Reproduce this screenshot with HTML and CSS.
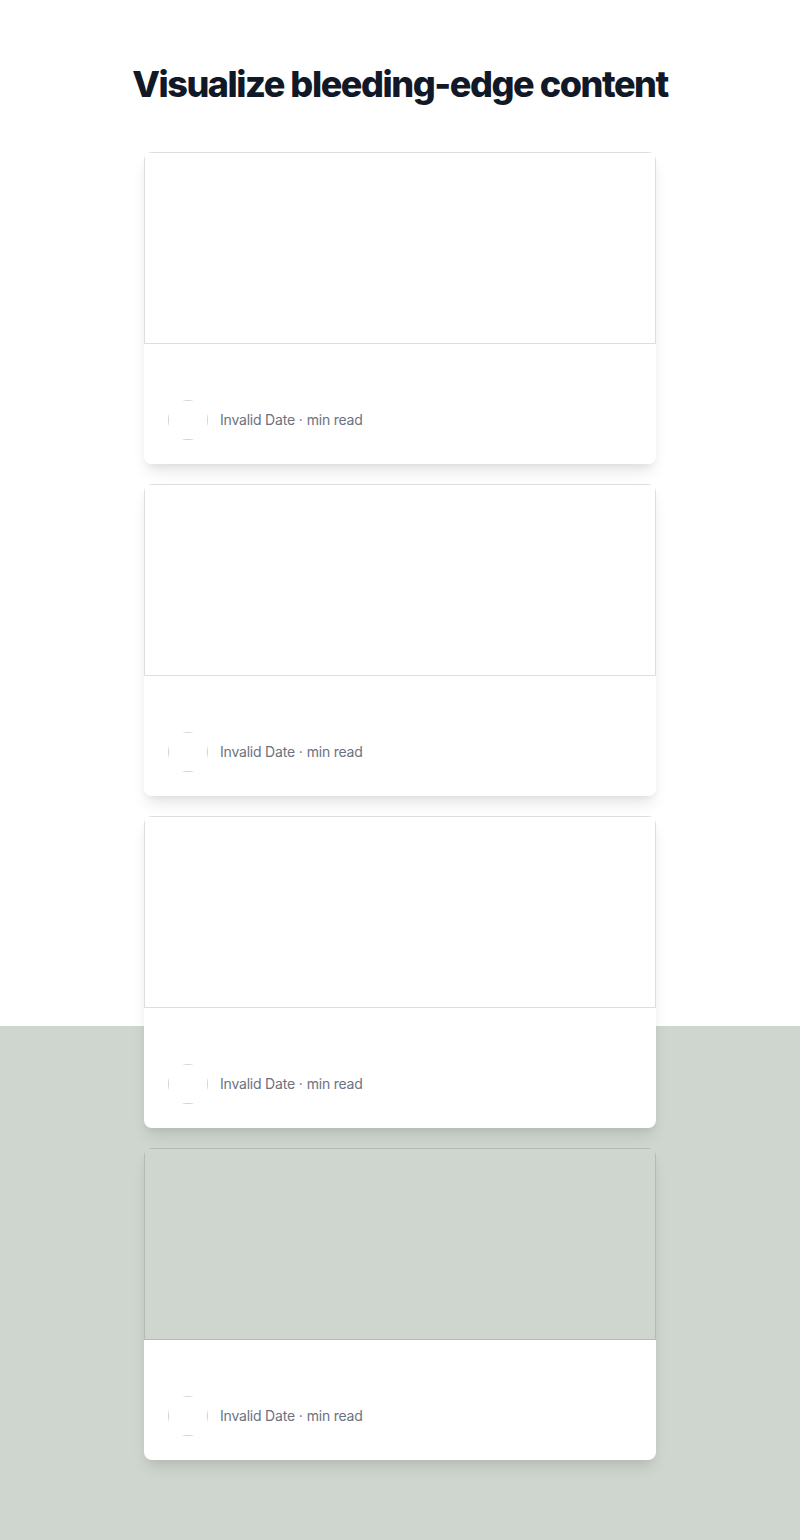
FILE: index.html
```html
<!DOCTYPE html>
<html lang="en">
<head>
<meta charset="utf-8">
<title>Visualize bleeding-edge content</title>
<link rel="stylesheet" href="styles.css">
</head>
<body>
<section class="blog">
  <div class="container">
    <div class="header">
      <h2 class="title">Visualize bleeding-edge content</h2>
    </div>
    <div class="grid">
      <article class="card">
        <div class="card-media"><div class="broken-img"></div></div>
        <div class="card-body">
          <div class="card-content"><p class="category"></p><a class="post-link"></a></div>
          <div class="author">
            <div class="avatar"><div class="avatar-img"></div></div>
            <div class="meta"><span>Invalid Date</span><span>·</span><span>min read</span></div>
          </div>
        </div>
      </article>
      <article class="card">
        <div class="card-media"><div class="broken-img"></div></div>
        <div class="card-body">
          <div class="card-content"><p class="category"></p><a class="post-link"></a></div>
          <div class="author">
            <div class="avatar"><div class="avatar-img"></div></div>
            <div class="meta"><span>Invalid Date</span><span>·</span><span>min read</span></div>
          </div>
        </div>
      </article>
      <article class="card">
        <div class="card-media"><div class="broken-img"></div></div>
        <div class="card-body">
          <div class="card-content"><p class="category"></p><a class="post-link"></a></div>
          <div class="author">
            <div class="avatar"><div class="avatar-img"></div></div>
            <div class="meta"><span>Invalid Date</span><span>·</span><span>min read</span></div>
          </div>
        </div>
      </article>
      <article class="card">
        <div class="card-media"><div class="broken-img"></div></div>
        <div class="card-body">
          <div class="card-content"><p class="category"></p><a class="post-link"></a></div>
          <div class="author">
            <div class="avatar"><div class="avatar-img"></div></div>
            <div class="meta"><span>Invalid Date</span><span>·</span><span>min read</span></div>
          </div>
        </div>
      </article>
    </div>
  </div>
</section>
</body>
</html>
```
FILE: styles.css
```css
* { box-sizing: border-box; }
html, body { margin: 0; padding: 0; }
body {
  font-family: Inter, "Liberation Sans", sans-serif;
  background: #fff;
}
.blog {
  min-height: 1540px;
  padding: 64px 16px 80px;
  background: linear-gradient(to bottom, #ffffff 0, #ffffff 1026px, #cfd6cf 1026px, #cfd6cf 100%);
}
.container {
  max-width: 1280px;
  margin: 0 auto;
}
.header { text-align: center; }
.title {
  margin: 0;
  font-size: 36px;
  line-height: 40px;
  font-weight: 800;
  letter-spacing: -0.04em;
  color: #111827;
}
.grid {
  margin: 48px auto 0;
  max-width: 512px;
  display: grid;
  grid-template-columns: 1fr;
  gap: 20px;
}
.card {
  display: flex;
  flex-direction: column;
  border-radius: 8px;
  overflow: hidden;
  box-shadow: 0 10px 15px -3px rgba(0,0,0,0.1), 0 4px 6px -2px rgba(0,0,0,0.05);
}
.card-media {
  flex-shrink: 0;
  height: 192px;
}
.broken-img {
  width: 100%;
  height: 100%;
  border: 1px solid rgba(0,0,0,0.13);
}
.card-body {
  flex: 1;
  background: #fff;
  padding: 24px;
  display: flex;
  flex-direction: column;
}
.card-content { flex: 1; }
.category { margin: 0; }
.post-link { display: block; margin-top: 8px; }
.author {
  margin-top: 24px;
  display: flex;
  align-items: center;
}
.avatar {
  flex-shrink: 0;
  width: 40px;
  height: 40px;
  border-radius: 50%;
  overflow: hidden;
}
.avatar-img {
  width: 100%;
  height: 100%;
  border: 1px solid rgba(0,0,0,0.18);
}
.meta {
  margin-left: 12px;
  display: flex;
  gap: 4px;
  font-size: 14px;
  line-height: 20px;
  letter-spacing: -0.015em;
  color: #6b7280;
}
```
